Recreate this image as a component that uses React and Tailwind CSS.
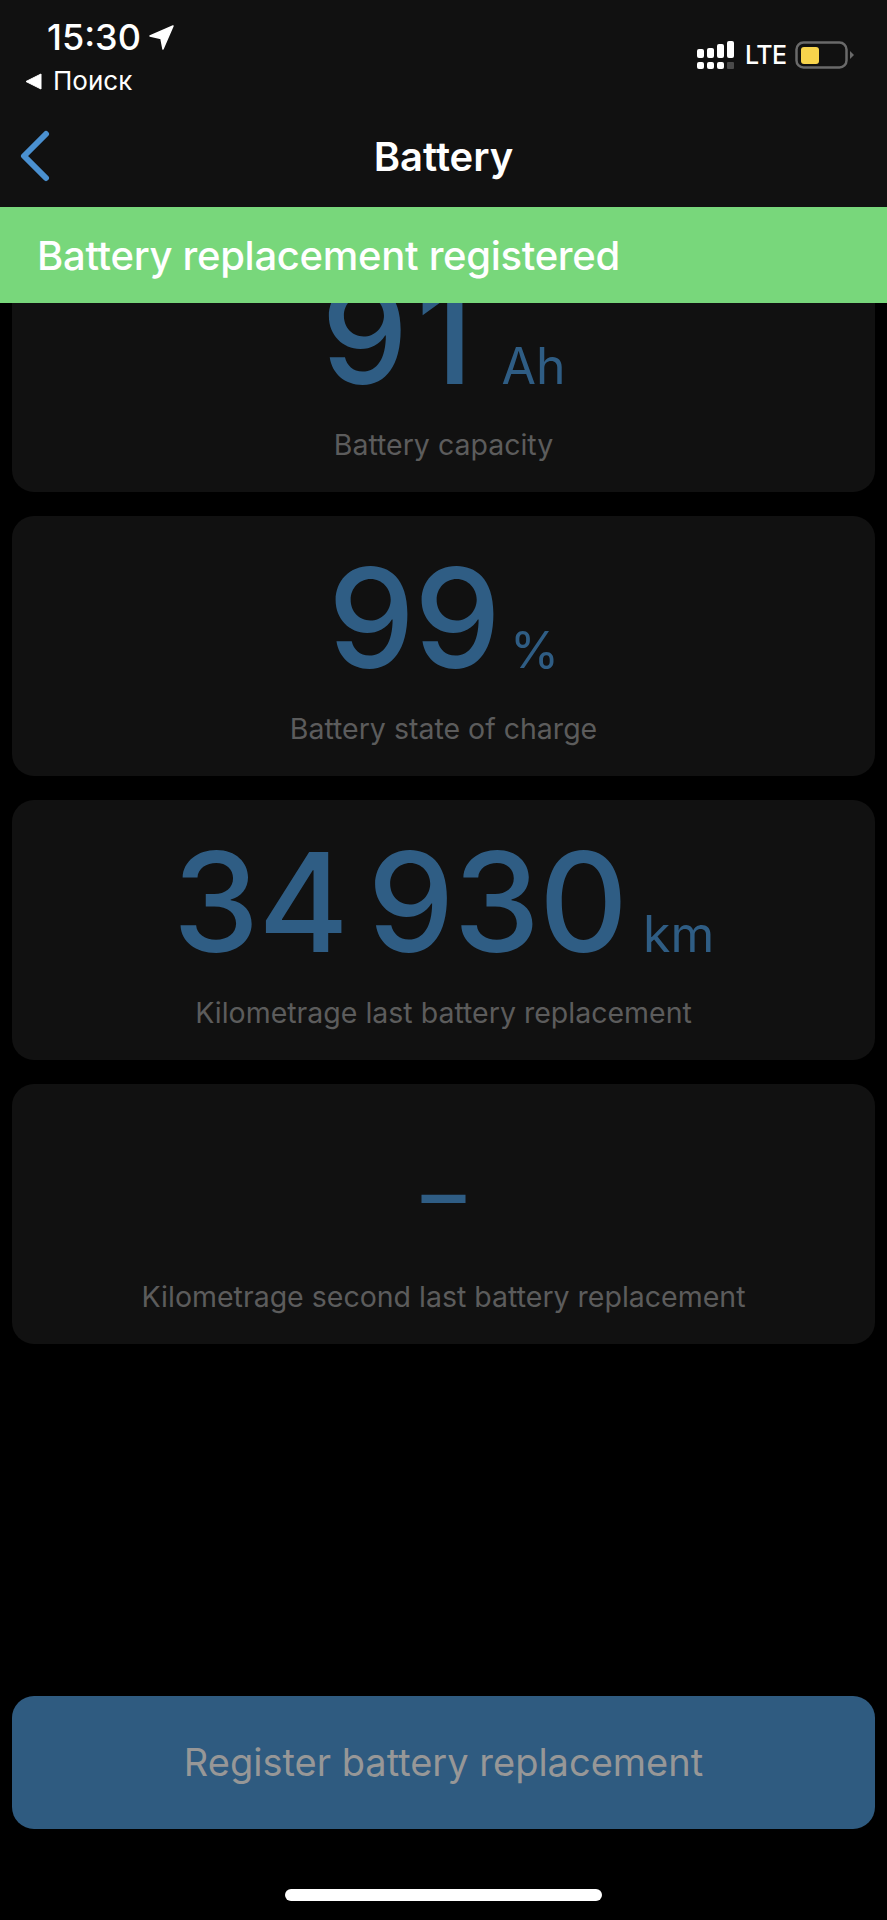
import React from 'react';

const labelClass = 'mt-[28px] text-[28.5px] leading-[34px] text-[#5c5c5c]';

function StatValue({ value, unit, unitClass = 'ml-[16px]', valueClass = 'text-[138px] leading-[132px] tracking-[-1px] [word-spacing:-16px]' }) {
  return (
    <div className="h-[132px] flex items-baseline justify-center text-[#2f5d84]">
      <span className={`font-medium ${valueClass}`}>{value}</span>
      {unit && <span className={`text-[50px] leading-none ${unitClass}`}>{unit}</span>}
    </div>
  );
}

function Card({ value, unit, unitClass, valueClass, label }) {
  return (
    <div className="rounded-[22px] bg-[#111111] flex flex-col items-center h-[260px] pt-[36px]">
      <StatValue value={value} unit={unit} unitClass={unitClass} valueClass={valueClass} />
      <div className={labelClass}>{label}</div>
    </div>
  );
}

function StatusBar() {
  return (
    <div className="relative h-[104px]">
      <div className="absolute left-[47px] top-[17px] flex items-center gap-[8px]">
        <span className="text-[36px] leading-[40px] font-medium text-white">15:30</span>
        <svg width="25" height="25" viewBox="0 0 25 25">
          <path d="M24 1 L1 11 L12 13.5 L14 24 Z" fill="#fff" stroke="#fff" strokeWidth="1.5" strokeLinejoin="round" />
        </svg>
      </div>
      <div className="absolute left-[25px] top-[65px] flex items-center gap-[11px]">
        <svg width="17" height="17" viewBox="0 0 17 17">
          <path d="M16 1 V16 L1 8.5 Z" fill="#fff" stroke="#fff" strokeLinejoin="round" />
        </svg>
        <span className="text-[26px] leading-[32px] text-white">Поиск</span>
      </div>
      <div className="absolute left-[696px] top-[40px] flex items-center">
        <svg width="40" height="30" viewBox="0 0 40 30" className="mr-[9px]">
          <rect x="1" y="9" width="7" height="9" rx="2" fill="#fff" />
          <rect x="11" y="8" width="7" height="10" rx="2" fill="#fff" />
          <rect x="21" y="4" width="7" height="14" rx="2" fill="#fff" />
          <rect x="31" y="1" width="7" height="17" rx="2" fill="#fff" />
          <rect x="1" y="22" width="7" height="7" rx="2" fill="#fff" />
          <rect x="11" y="22" width="7" height="7" rx="2" fill="#fff" />
          <rect x="21" y="22" width="7" height="7" rx="2" fill="#fff" />
          <rect x="31" y="22" width="7" height="7" rx="1" fill="#4a4a4a" />
        </svg>
        <span className="text-[25px] leading-[30px] font-medium tracking-[-0.5px] text-white mr-[8px]">LTE</span>
        <svg width="60" height="30" viewBox="0 0 60 30">
          <rect x="1.5" y="2.5" width="50" height="25" rx="7" fill="none" stroke="#6a6a6a" strokeWidth="2.5" />
          <rect x="6" y="7" width="18" height="17" rx="3" fill="#f8d44c" />
          <path d="M55 11 L59 15 L55 19 Z" fill="#6a6a6a" />
        </svg>
      </div>
    </div>
  );
}

export default function App() {
  return (
    <div className="h-[1920px] bg-black flex flex-col font-['Inter',sans-serif] overflow-hidden">
      <header className="bg-[#111111] h-[207px] shrink-0">
        <StatusBar />
        <div className="relative h-[103px] flex items-center justify-center pt-[3px]">
          <svg width="32" height="52" viewBox="0 0 32 52" className="absolute left-[19px] top-[26px]">
            <path d="M27 4 L5 26 L27 48" fill="none" stroke="#4a90d0" strokeWidth="6" strokeLinecap="round" strokeLinejoin="round" />
          </svg>
          <h1 className="text-[40px] leading-[46px] font-semibold text-white">Battery</h1>
        </div>
      </header>

      <div className="bg-[#78d77b] h-[96px] shrink-0 flex items-center pl-[37px] pt-[2px]">
        <span className="text-[40px] leading-[44px] font-medium tracking-[-0.3px] text-white">Battery replacement registered</span>
      </div>

      <main className="px-3 flex flex-col gap-[24px]">
        {/* first card is scrolled under the banner */}
        <div className="h-[189px] overflow-hidden rounded-b-[22px] bg-[#111111] flex flex-col items-center justify-end pb-[30px]">
          <StatValue value="91" unit="Ah" unitClass="ml-[20px]" valueClass="text-[138px] leading-[132px] tracking-[8px]" />
          <div className={labelClass}>Battery capacity</div>
        </div>
        <Card value="99" unit="%" unitClass="ml-[10px]" label="Battery state of charge" />
        <Card value="34 930" unit="km" label="Kilometrage last battery replacement" />
        <Card value="–" valueClass="text-[88px] leading-[148px]" label="Kilometrage second last battery replacement" />
      </main>

      <div className="mt-auto px-3 pb-[19px] flex flex-col items-center">
        <button className="w-full h-[133px] rounded-[22px] bg-[#2f5b80] text-[38px] text-[#979797]">
          Register battery replacement
        </button>
        <div className="mt-[60px] w-[317px] h-[12px] rounded-full bg-white" />
      </div>
    </div>
  );
}
